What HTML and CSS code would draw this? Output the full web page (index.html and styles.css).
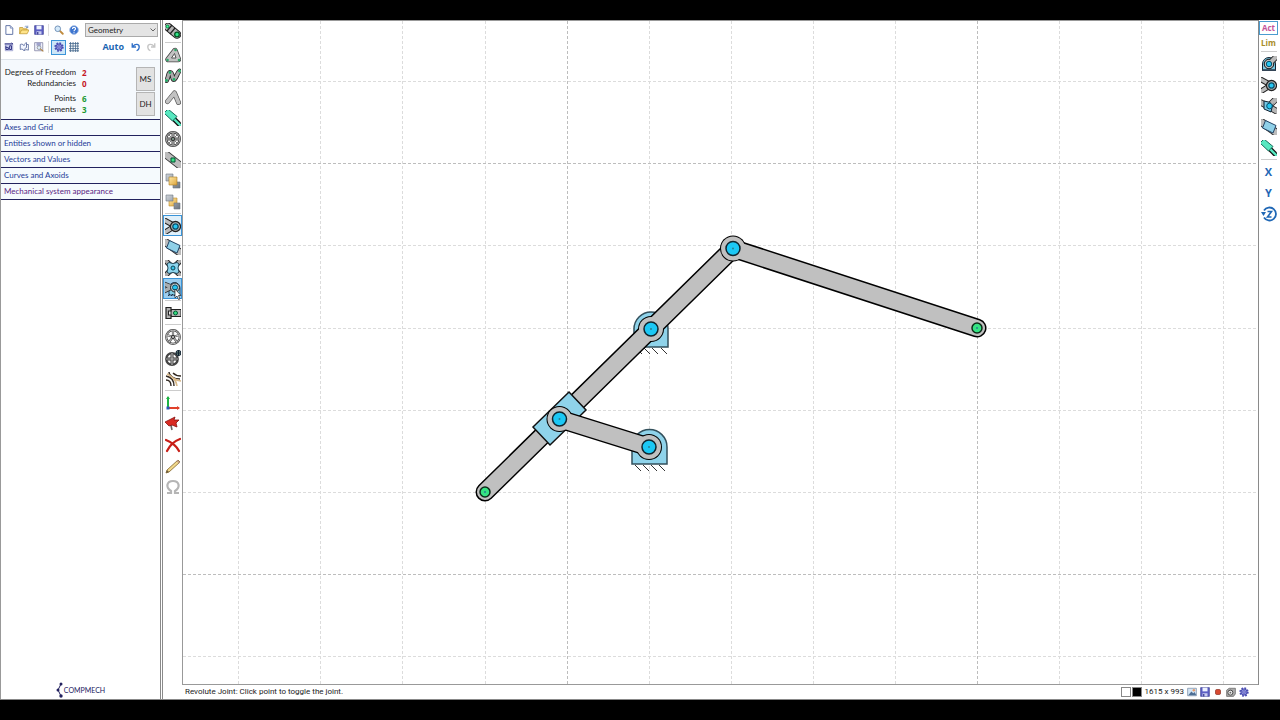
FILE: index.html
```html
<!DOCTYPE html>
<html lang="en">
<head>
<meta charset="utf-8">
<title>Mechanism editor</title>
<link rel="stylesheet" href="styles.css">
</head>
<body>
<svg class="sprite" aria-hidden="true">
  <symbol id="i-new" viewBox="0 0 16 16"><path d="M3 1h7l4 4v10H3z" fill="#fff" stroke="#5c6fa3" stroke-width="1.5"/><path d="M10 1v4h4" fill="#cfd8ee" stroke="#5c6fa3"/></symbol>
  <symbol id="i-open" viewBox="0 0 16 16"><path d="M1 14V4h5l1 2h6v3" fill="#f3d473" stroke="#b38a1c"/><path d="M1 14l3-6h12l-3 6z" fill="#ffe48a" stroke="#b38a1c"/><path d="M9 3c2-2 4-1 5 1m0-3v3h-3" fill="none" stroke="#4a6da8"/></symbol>
  <symbol id="i-save" viewBox="0 0 16 16"><path d="M1 1h14v14H1z" fill="#5c5fc4" stroke="#34368c"/><path d="M4 1h8v6H4z" fill="#eef2ff"/><path d="M4 10h8v5H4z" fill="#c9cdf0"/><path d="M5 11h2v4H5z" fill="#34368c"/></symbol>
  <symbol id="i-find" viewBox="0 0 16 16"><path d="M9 9l5 5" stroke="#c08a3c" stroke-width="3" stroke-linecap="round"/><circle cx="6" cy="6" r="4.5" fill="#d4e9fa" stroke="#6f8fb5" stroke-width="1.5"/></symbol>
  <symbol id="i-help" viewBox="0 0 16 16"><circle cx="8" cy="8" r="7" fill="#3c74cf" stroke="#a9c1e8" stroke-width="1.5"/><path d="M5.5 6.5C5.5 3 10.5 3 10.5 6c0 2-2.500 1.500-2.500 4m0 1.500v1.500" fill="none" stroke="#fff" stroke-width="1.8"/></symbol>
  <symbol id="i-fit" viewBox="0 0 16 16"><path d="M2 3h12v11H2z" fill="#c9cdee" stroke="#8d90c4"/><path d="M3 6v6M3 9h4v3H3M9 6h3v6H9zM1 3h13l-2-2" fill="none" stroke="#2d3080" stroke-width="1.5"/></symbol>
  <symbol id="i-book" viewBox="0 0 16 16"><path d="M8 14C6 11 4 11 2 12V4c2-1 4-1 6 2 0-3 2-4 4-5v8c-2 1-4 2-4 5z" fill="#f3f6ff" stroke="#5f6fa0" stroke-width="1.4"/><path d="M8 14c2-2 4-2 7-1V4h-3" fill="none" stroke="#5f6fa0" stroke-width="1.4"/></symbol>
  <symbol id="i-export" viewBox="0 0 16 16"><path d="M1 1h13v13H1z" fill="#eef0fa" stroke="#66698f"/><path d="M4 1h7v5H4z" fill="#9ea2cc"/><circle cx="8" cy="9" r="3" fill="#dcecfa" stroke="#777"/><path d="M10 11l5 4" stroke="#b0813f" stroke-width="2"/></symbol>
  <symbol id="i-gear" viewBox="0 0 16 16"><circle cx="8" cy="8" r="6" fill="none" stroke="#4a4db5" stroke-width="3" stroke-dasharray="2.700 2"/><circle cx="8" cy="8" r="5" fill="#8a8de0" stroke="#4144a6" stroke-width="1.5"/><circle cx="8" cy="8" r="2" fill="#b5b8ee" stroke="#4144a6"/></symbol>
  <symbol id="i-grid" viewBox="0 0 16 16"><path d="M2.500 0v16M6.500 0v16M10.500 0v16M14 0v16M0 2.500h16M0 6.500h16M0 10.500h16M0 14h16" stroke="#44678c" stroke-width="1.3"/></symbol>
  <symbol id="i-undo" viewBox="0 0 16 16"><path d="M2 2v6h6M3 7c4-5 11-4 10 2 0 2-2 4-4 5" fill="none" stroke="#3170c8" stroke-width="2.2"/></symbol>
  <symbol id="i-redo" viewBox="0 0 16 16"><path d="M14 2v6H8M13 7C9 2 2 3 3 9c0 2 2 4 4 5" fill="none" stroke="#c5c5c5" stroke-width="2.2"/></symbol>
  <symbol id="i-chevron" viewBox="0 0 16 16"><path d="M3 5l5 5 5-5" fill="none" stroke="#555" stroke-width="1.8"/></symbol>

  <symbol id="i-link" viewBox="0 0 16 16"><path d="M3 4l9 7.500" stroke="#222" stroke-width="8.500" stroke-linecap="round"/><path d="M3 4l9 7.500" stroke="#b4b4b4" stroke-width="6.500" stroke-linecap="round"/><path d="M2 8l5-6M5 11l5-6" stroke="#222" stroke-width="1.2"/><circle cx="2.500" cy="3.500" r="1.400" fill="#4f9" stroke="#084"/><circle cx="12" cy="11.500" r="2.300" fill="#2fe58a" stroke="#052" stroke-width="1.3"/></symbol>
  <symbol id="i-tri" viewBox="0 0 16 16"><path d="M10 3.500L3 12.500h10.500z" fill="none" stroke="#444" stroke-width="5.400" stroke-linejoin="round"/><path d="M10 3.500L3 12.500h10.500z" fill="#c2c2c2" stroke="#c2c2c2" stroke-width="3.800" stroke-linejoin="round"/><path d="M9.500 6.500l-3 4.500h4.500z" fill="#fff" stroke="#555"/><g fill="#2fa868"><circle cx="10.500" cy="3" r="1.300"/><circle cx="2.500" cy="13" r="1.300"/><circle cx="14" cy="13" r="1.300"/></g></symbol>
  <symbol id="i-poly" viewBox="0 0 16 16"><g fill="none" stroke-linecap="round" stroke-linejoin="round"><path d="M1.500 12.500C4 9 3 4 5.500 4.500S7 12 9 11.500 12 5 14.500 3" stroke="#222" stroke-width="4.800"/><path d="M1.500 12.500C4 9 3 4 5.500 4.500S7 12 9 11.500 12 5 14.500 3" stroke="#aaa" stroke-width="3.200"/></g><g fill="#1fae66"><circle cx="1.500" cy="12.500" r="1.400"/><circle cx="5" cy="4.500" r="1.400"/><circle cx="9" cy="11.500" r="1.400"/><circle cx="14.500" cy="3" r="1.400"/></g></symbol>
  <symbol id="i-angle" viewBox="0 0 16 16"><g fill="none" stroke-linecap="round" stroke-linejoin="round"><path d="M2.500 12.500L9.500 4l4 9.500" stroke="#555" stroke-width="5"/><path d="M2.500 12.500L9.500 4l4 9.500" stroke="#c2c2c2" stroke-width="3.600"/></g></symbol>
  <symbol id="i-piston" viewBox="0 0 16 16"><path d="M7 7l9 9" stroke="#111" stroke-width="5"/><path d="M7 7l9 9" stroke="#57e8c0" stroke-width="2.400"/><path d="M-1 3l4-4 9 7.500-4.500 4.500z" fill="#57e8c0" stroke="#176e5c"/></symbol>
  <symbol id="i-wheel" viewBox="0 0 16 16"><circle cx="8" cy="8" r="6.800" fill="#fff" stroke="#444" stroke-width="2.400"/><circle cx="8" cy="8" r="6.800" fill="none" stroke="#aaa"/><path d="M8 2v12M2 8h12" stroke="#444" stroke-width="3"/><path d="M4 4l8 8M12 4l-8 8" stroke="#777"/><path d="M8 2v12M2 8h12" stroke="#bbb" stroke-width="1.2"/><circle cx="8" cy="8" r="1.600" fill="#7f9a8b" stroke="#333"/></symbol>
  <symbol id="i-gearwheel" viewBox="0 0 16 16"><circle cx="8" cy="8" r="6.800" fill="#fff" stroke="#444" stroke-width="2.200"/><circle cx="8" cy="8" r="6.800" fill="none" stroke="#bbb"/><path d="M8 8V2M8 8l6-2M8 8l4 5M8 8l-4 5M8 8L2 6" stroke="#555" stroke-width="2.200"/><path d="M8 8V2M8 8l6-2M8 8l4 5M8 8l-4 5M8 8L2 6" stroke="#ccc"/><circle cx="8" cy="8" r="1.600" fill="#bbb" stroke="#333"/></symbol>
  <symbol id="i-bar" viewBox="0 0 16 16"><path d="M-1 1l18 14" stroke="#333" stroke-width="8"/><path d="M-1 1l18 14" stroke="#bcbcbc" stroke-width="6.200"/><path d="M6 6h4v4H6z" fill="#38e084" stroke="#053"/></symbol>
  <linearGradient id="slate" x2="1" y2="1"><stop offset="0" stop-color="#cfd4da"/><stop offset="1" stop-color="#6c747e"/></linearGradient>
  <linearGradient id="gold" x2="1" y2="1"><stop offset="0" stop-color="#ffe9a6"/><stop offset="1" stop-color="#dda53c"/></linearGradient>
  <symbol id="i-front" viewBox="0 0 16 16"><path d="M1 1h7v7H1zM8 9h7v6H8z" fill="url(#slate)" stroke="#6d7580" stroke-width=".6"/><path d="M4 4h8v8H4z" fill="url(#gold)" stroke="#a97e25" stroke-width=".6"/></symbol>
  <symbol id="i-back" viewBox="0 0 16 16"><path d="M4 4h8v8H4z" fill="url(#gold)" stroke="#b98b2c" stroke-width=".6"/><path d="M1 1h7v6H1zM9 9h6v6H9z" fill="url(#slate)" stroke="#6d7580" stroke-width=".6"/></symbol>
  <symbol id="i-rev" viewBox="0 0 16 16"><path d="M-1 2l11 6L-1 15" fill="none" stroke="#222" stroke-width="5.600"/><path d="M-1 2l11 6L-1 15" fill="none" stroke="#bdbdbd" stroke-width="3.600"/><circle cx="10.500" cy="8.500" r="5" fill="#c4c4c4" stroke="#222" stroke-width="1.300"/><circle cx="10.500" cy="8.500" r="2.700" fill="#25c6f2" stroke="#0a4f68" stroke-width="1.300"/></symbol>
  <symbol id="i-slide" viewBox="0 0 16 16"><path d="M-1 2l18 13" stroke="#333" stroke-width="8"/><path d="M-1 2l18 13" stroke="#bcbcbc" stroke-width="6"/><path d="M4.500 1.500L15 6.500 12 14 1.500 9z" fill="#8fd0e8" stroke="#246"/></symbol>
  <symbol id="i-cross" viewBox="0 0 16 16"><path d="M1 1l14 14M15 1L1 15" stroke="#222" stroke-width="5.500"/><path d="M0 0l16 16M16 0L0 16" stroke="#aaa" stroke-width="3.600"/><path d="M4 2.500l4 1 4-1 2 1.500-1 4 1 4-2 1.500-4-1-4 1L2 12l1-4-1-4z" fill="#8cd5ee" stroke="#245"/><circle cx="8" cy="8" r="2" fill="#38c4e8" stroke="#145"/></symbol>
  <symbol id="i-ground" viewBox="0 0 16 16"><path d="M1.500 14V8a6.500 6.500 0 0 1 13 0v6z" fill="#79c8e2" stroke="#123"/><path d="M16 0L8 8" stroke="#222" stroke-width="6"/><circle cx="8" cy="8" r="4.800" fill="#bbb" stroke="#111"/><path d="M17-1L8 8" stroke="#bbb" stroke-width="4.400"/><circle cx="8" cy="8" r="2.700" fill="#25c6f2" stroke="#05506c"/><path d="M1 13.500h14v1.500H1z" fill="#345"/></symbol>
  <symbol id="i-ground2" viewBox="0 0 16 16"><path d="M4 14V7a5 5 0 0 1 11 0v7z" fill="#84cee5" stroke="#246"/><path d="M-1 10l10-5M-1 3l10 4" stroke="#222" stroke-width="5"/><path d="M-1 10l10-5M-1 3l10 4" stroke="#a8adb0" stroke-width="3.600"/><circle cx="10" cy="6.500" r="4.500" fill="#b9c7cc" stroke="#222"/><circle cx="10" cy="6.500" r="2.500" fill="#25c6f2" stroke="#05506c"/><path d="M3 15l2-2m1 2l2-2m1 2l2-2" stroke="#234"/></symbol>
  <symbol id="i-revslide" viewBox="0 0 16 16"><path d="M-1 4l18 10M16 0L8 8" stroke="#222" stroke-width="6.500"/><path d="M-1 4l18 10M17-1L8 8" stroke="#b5b5b5" stroke-width="4.800"/><path d="M3 3l9 2-2 9-7-3z" fill="#78c9e6" stroke="#123"/><path d="M17-1L9 7" stroke="#b5b5b5" stroke-width="3"/><circle cx="8.500" cy="8" r="2.800" fill="#25c6f2" stroke="#05506c"/></symbol>
  <symbol id="i-weld" viewBox="0 0 16 16"><path d="M6 4.500h10v7H6z" fill="#b5b5b5" stroke="#222"/><path d="M1 2.500h5V6H3.500v4H6v3.500H1z" fill="#b0b0b0" stroke="#222" stroke-width="1.200"/><circle cx="10.500" cy="8" r="2" fill="#35dc7f" stroke="#053"/></symbol>
  <symbol id="i-gears" viewBox="0 0 16 16"><circle cx="7" cy="9" r="5.800" fill="#fff" stroke="#444" stroke-width="2.200"/><path d="M1 9h12M7 3v12" stroke="#333" stroke-width="3"/><path d="M1 9h12M7 3v12" stroke="#bbb" stroke-width="1.200"/><circle cx="13.500" cy="3" r="2.600" fill="#6f8a7d" stroke="#123"/><path d="M11 3h5M13.500 0v6" stroke="#123"/></symbol>
  <symbol id="i-curves" viewBox="0 0 16 16"><g fill="none"><path d="M1 5c5 1 8 4 8 10M4 1c0 4 5 7 11 7M8 2c2 2 4 3 8 3M1 9c3 0 5 2 5 6" stroke="#332a22" stroke-width="1.400"/><path d="M2 3c5 2 9 5 10 12M8 7c3 2 5 3 8 3" stroke="#d9b989" stroke-width="1.600"/></g></symbol>
  <symbol id="i-axes" viewBox="0 0 16 16"><path d="M3 13V2" stroke="#1fb443" stroke-width="2"/><path d="M1 4l2-3 2 3z" fill="#1fb443"/><path d="M3 13h11" stroke="#e0402a" stroke-width="2"/><path d="M12 11l3 2-3 2z" fill="#e0402a"/><path d="M1.500 11.500h3v3h-3z" fill="#2b57b8"/></symbol>
  <symbol id="i-flag" viewBox="0 0 16 16"><path d="M7 14L5 5" stroke="#666" stroke-width="1.600"/><path d="M0 6l10-5-1 3 5 0-3 3 1 4-5-2-3 1z" fill="#d92a22" stroke="#86120f" stroke-width=".8"/></symbol>
  <symbol id="i-delete" viewBox="0 0 16 16"><path d="M1 3c5 2 10 5 13 11M15 2C9 4 5 8 2 14" fill="none" stroke="#c81e17" stroke-width="2.200" stroke-linecap="round"/></symbol>
  <symbol id="i-pencil" viewBox="0 0 16 16"><path d="M1 15l1-3L13 2l2 2L4 14z" fill="#f2d98b" stroke="#8c7138" stroke-width=".9"/><path d="M1 15l1-3 2 2z" fill="#6b5b3b"/><path d="M12 2.500l2.500 2.500" stroke="#b98" stroke-width="1.500"/></symbol>
  <symbol id="i-omega" viewBox="0 0 16 16"><path d="M2 14h4v-2C0 8 2 2 8 2s8 6 2 10v2h4" fill="none" stroke="#b5b5b5" stroke-width="2.200"/></symbol>
  <symbol id="i-rotz" viewBox="0 0 16 16"><path d="M3 4.500a6.500 6.500 0 1 1 0 7" fill="none" stroke="#1f67b5" stroke-width="1.800"/><path d="M0 6l2.500 4L5 6z" fill="#1f67b5"/><path d="M6.500 5.500h4L6.500 11h4" fill="none" stroke="#1f67b5" stroke-width="1.600"/></symbol>
  <symbol id="i-image" viewBox="0 0 16 16"><path d="M1 2h14v12H1z" fill="#d3e5f5" stroke="#667d99"/><path d="M2 13l5-6 3 3 2-2 3 5z" fill="#4f6f94"/><circle cx="11" cy="5" r="2" fill="#e59a69"/></symbol>
  <symbol id="i-record" viewBox="0 0 16 16"><rect x="4" y="4" width="8" height="8" rx="2" fill="#d84a30" stroke="#7e2417"/></symbol>
  <symbol id="i-camera" viewBox="0 0 16 16"><path d="M1 5l4-3h10v9l-3 4H1z" fill="#aaa" stroke="#555"/><circle cx="7" cy="9" r="4" fill="#eee" stroke="#444" stroke-width="1.500"/><circle cx="7" cy="9" r="1.500" fill="#666"/></symbol>
</svg>

<div class="app">
  <aside class="panel">
    <div class="tools">
      <div class="tool-row">
        <button class="mini" aria-label="New"><svg><use href="#i-new"/></svg></button>
        <button class="mini" aria-label="Open"><svg><use href="#i-open"/></svg></button>
        <button class="mini" aria-label="Save"><svg><use href="#i-save"/></svg></button>
        <span class="divider"></span>
        <button class="mini" aria-label="Find"><svg><use href="#i-find"/></svg></button>
        <button class="mini" aria-label="Help"><svg><use href="#i-help"/></svg></button>
        <div class="select">
          <select aria-label="Mode"><option>Geometry</option></select>
          <svg><use href="#i-chevron"/></svg>
        </div>
      </div>
      <div class="tool-row">
        <button class="mini" aria-label="Fit"><svg><use href="#i-fit"/></svg></button>
        <button class="mini" aria-label="Library"><svg><use href="#i-book"/></svg></button>
        <button class="mini" aria-label="Export"><svg><use href="#i-export"/></svg></button>
        <span class="divider"></span>
        <button class="mini mini-on" aria-label="Settings"><svg><use href="#i-gear"/></svg></button>
        <button class="mini" aria-label="Grid"><svg><use href="#i-grid"/></svg></button>
        <button class="auto">Auto</button>
        <button class="mini" aria-label="Undo"><svg><use href="#i-undo"/></svg></button>
        <button class="mini" aria-label="Redo" disabled><svg><use href="#i-redo"/></svg></button>
      </div>
    </div>
    <div class="info">
      <dl class="stats">
        <dt>Degrees of Freedom</dt><dd class="red">2</dd>
        <dt>Redundancies</dt><dd class="red">0</dd>
        <dt class="second">Points</dt><dd class="second green">6</dd>
        <dt>Elements</dt><dd class="green">3</dd>
      </dl>
      <div class="info-buttons">
        <button class="square">MS</button>
        <button class="square">DH</button>
      </div>
    </div>
    <nav class="sections">
      <button class="section">Axes and Grid</button>
      <button class="section">Entities shown or hidden</button>
      <button class="section">Vectors and Values</button>
      <button class="section">Curves and Axoids</button>
      <button class="section visited">Mechanical system appearance</button>
    </nav>
    <div class="logo">
      <svg class="logo-mark" viewBox="0 0 8 16" aria-hidden="true"><path d="M5 2L2 8l3 6" fill="none" stroke="#22205e"/><g fill="#22205e"><circle cx="5" cy="2" r="1.500"/><circle cx="2" cy="8" r="1.500"/><circle cx="5" cy="14" r="1.700"/></g></svg>
      <span>COMPMECH</span>
    </div>
  </aside>

  <div class="toolbar" role="toolbar" aria-label="Elements">
    <button class="tool" aria-label="Link"><svg><use href="#i-link"/></svg></button>
    <hr>
    <button class="tool" aria-label="Triangle"><svg><use href="#i-tri"/></svg></button>
    <button class="tool" aria-label="Polyline"><svg><use href="#i-poly"/></svg></button>
    <button class="tool" aria-label="Angle"><svg><use href="#i-angle"/></svg></button>
    <button class="tool" aria-label="Actuator"><svg><use href="#i-piston"/></svg></button>
    <button class="tool" aria-label="Wheel"><svg><use href="#i-wheel"/></svg></button>
    <button class="tool" aria-label="Point on bar"><svg><use href="#i-bar"/></svg></button>
    <button class="tool" aria-label="Bring to front"><svg><use href="#i-front"/></svg></button>
    <button class="tool" aria-label="Send to back"><svg><use href="#i-back"/></svg></button>
    <hr>
    <button class="tool tool-on" aria-label="Revolute joint"><svg><use href="#i-rev"/></svg></button>
    <button class="tool" aria-label="Prismatic joint"><svg><use href="#i-slide"/></svg></button>
    <button class="tool" aria-label="Pin in slot"><svg><use href="#i-cross"/></svg></button>
    <button class="tool tool-hover" aria-label="Grounded joint"><svg><use href="#i-ground2"/></svg>
      <svg class="pointer" viewBox="0 0 8 12" aria-hidden="true"><path d="M1 1v9l2-2 1.500 3.500L6 11 4.500 7.500H7z" fill="#fff" stroke="#222" stroke-width=".7"/></svg></button>
    <hr>
    <button class="tool" aria-label="Weld"><svg><use href="#i-weld"/></svg></button>
    <hr>
    <button class="tool" aria-label="Gear"><svg><use href="#i-gearwheel"/></svg></button>
    <button class="tool" aria-label="Gear pair"><svg><use href="#i-gears"/></svg></button>
    <button class="tool" aria-label="Cam"><svg><use href="#i-curves"/></svg></button>
    <hr>
    <button class="tool" aria-label="Axes"><svg><use href="#i-axes"/></svg></button>
    <button class="tool" aria-label="Flag"><svg><use href="#i-flag"/></svg></button>
    <button class="tool" aria-label="Delete"><svg><use href="#i-delete"/></svg></button>
    <button class="tool" aria-label="Edit"><svg><use href="#i-pencil"/></svg></button>
    <button class="tool" aria-label="Omega" disabled><svg><use href="#i-omega"/></svg></button>
  </div>

  <main class="work">
    <div class="stage">
      <svg class="drawing" role="img" aria-label="Planar mechanism">
        <g transform="translate(-183 -21)">
          <g class="grid-lines">
            <path d="M238.500 21V2000M320.500 21V2000M402.500 21V2000M485.500 21V2000M649.500 21V2000M731.500 21V2000M813.500 21V2000M895.500 21V2000M1059.500 21V2000M1141.500 21V2000M1223.500 21V2000"/>
            <path d="M183 81.500H4000M183 245.500H4000M183 328.500H4000M183 410.500H4000M183 492.500H4000M183 656.500H4000"/>
            <path class="major" d="M567.500 21V2000M977.500 21V2000M183 163.500H4000M183 574.500H4000"/>
          </g>
          <g class="ground">
            <path d="M634 347V329a17 17 0 0 1 34 0v18z"/>
            <path d="M632 464V447a17.500 17.500 0 0 1 35 0v17z"/>
            <path class="hatch" d="M636 348l6 6m2-6l6 6m2-6l6 6m3-6l6 6M635 465l6 6m2-6l6 6m2-6l6 6m2-6l6 6"/>
          </g>
          <g class="edge"><path d="M485 492L733 248.500"/><circle cx="651" cy="329" r="13"/></g>
          <g class="body"><path d="M485 492L733 248.500"/><circle cx="651" cy="329" r="12"/></g>
          <g class="edge"><path d="M733 248.500L977 328"/><circle cx="733" cy="248.500" r="13"/></g>
          <g class="body"><path d="M733 248.500L977 328"/><circle cx="733" cy="248.500" r="12"/></g>
          <path class="slider" d="M569 392l17 18-36 35-17-18z"/>
          <g class="edge"><path d="M559.500 419L649 447"/><circle cx="559.500" cy="419" r="13"/><circle cx="649" cy="447" r="13"/></g>
          <g class="body"><path d="M559.500 419L649 447"/><circle cx="559.500" cy="419" r="12"/><circle cx="649" cy="447" r="12"/></g>
          <g class="pin"><circle cx="733" cy="248.500" r="7"/><circle cx="651" cy="329" r="7"/><circle cx="559.500" cy="419" r="7"/><circle cx="649" cy="447" r="7"/></g>
          <g class="free"><circle cx="485" cy="492" r="5"/><circle cx="977" cy="328" r="5"/></g>
          <g class="centers"><circle cx="733" cy="248.500" r="1"/><circle cx="651" cy="329" r="1"/><circle cx="559.500" cy="419" r="1"/><circle cx="649" cy="447" r="1"/><circle cx="485" cy="492" r="1"/><circle cx="977" cy="328" r="1"/></g>
        </g>
      </svg>
    </div>
  </main>

  <div class="toolbar toolbar-right" role="toolbar" aria-label="Drivers">
    <button class="word act">Act</button>
    <button class="word lim">Lim</button>
    <hr>
    <button class="tool" aria-label="Rotary actuator"><svg><use href="#i-ground"/></svg></button>
    <button class="tool" aria-label="Revolute driver"><svg><use href="#i-rev"/></svg></button>
    <button class="tool" aria-label="Slider revolute driver"><svg><use href="#i-revslide"/></svg></button>
    <button class="tool" aria-label="Slider driver"><svg><use href="#i-slide"/></svg></button>
    <button class="tool" aria-label="Linear actuator"><svg><use href="#i-piston"/></svg></button>
    <hr>
    <button class="tool axis">X</button>
    <button class="tool axis">Y</button>
    <button class="tool" aria-label="Rotate Z"><svg><use href="#i-rotz"/></svg></button>
  </div>

  <footer class="status">
    <span class="message">Revolute Joint: Click point to toggle the joint.</span>
    <button class="swatch white" aria-label="Background colour"></button>
    <button class="swatch black" aria-label="Line colour"></button>
    <span class="size">1615 x 993</span>
    <button class="mini" aria-label="Image"><svg><use href="#i-image"/></svg></button>
    <button class="mini" aria-label="Save image"><svg><use href="#i-save"/></svg></button>
    <button class="mini" aria-label="Record"><svg><use href="#i-record"/></svg></button>
    <button class="mini" aria-label="Camera"><svg><use href="#i-camera"/></svg></button>
    <button class="mini" aria-label="Options"><svg><use href="#i-gear"/></svg></button>
  </footer>
</div>
</body>
</html>
```
FILE: styles.css
```css
* { box-sizing: border-box; }
body {
  margin: 0;
  min-height: 100vh;
  padding: 20px 0;
  display: flex;
  background: #000;
  color: #222;
  font: 8px/12px Roboto, Arial, sans-serif;
}
button { margin: 0; padding: 0; border: 0; background: none; color: inherit; font: inherit; }
.sprite { position: absolute; width: 0; height: 0; }

.app {
  flex: 1;
  display: grid;
  grid-template-columns: 161px 21px minmax(0, 1fr) 22px;
  grid-template-rows: minmax(0, 1fr) 14px;
  background: #fff;
  border-bottom: 1px solid #888;
}

/* Side panel */
.panel {
  grid-row: 1 / 3;
  display: flex;
  flex-direction: column;
  border-left: 1px solid #999;
  border-right: 1px solid #8a8a8a;
  font-family: Lato, Arial, sans-serif;
}
.tools {
  display: flex;
  flex-direction: column;
  gap: 1px;
  padding: 2px 2px 4px 0;
}
.tool-row { display: flex; align-items: center; height: 16px; }
.mini {
  display: flex;
  align-items: center;
  justify-content: center;
  width: 15px;
  height: 15px;
}
.mini svg { width: 10px; height: 10px; }
.mini-on { border: 1px solid #3a94d8; background: #cde6f7; }
.divider { width: 1px; height: 12px; margin: 0 2px; background: #ddd; }
.select { position: relative; flex: 1; margin-left: 4px; }
.select select {
  display: block;
  width: 100%;
  height: 14px;
  padding: 0 2px;
  border: 1px solid #aaa;
  border-radius: 0;
  background: #e4e4e4;
  color: #222;
  font: inherit;
  appearance: none;
}
.select svg { position: absolute; top: 3px; right: 1px; width: 8px; height: 8px; pointer-events: none; }
.auto {
  flex: 1;
  padding-right: 4px;
  color: #1b66b3;
  font: bold 9px/14px "Open Sans", sans-serif;
  text-align: right;
}
.info {
  display: flex;
  justify-content: space-between;
  height: 60px;
  padding: 7px 5px 3px 0;
  border-top: 1px solid #dde3ea;
  background: #f5f9fd;
}
.stats {
  display: grid;
  grid-template-columns: 75px 12px;
  grid-auto-rows: max-content;
  column-gap: 6px;
  margin: 0;
  line-height: 11px;
  text-align: right;
  white-space: nowrap;
}
.stats dd { margin: 0; font: bold 8px/11px "Open Sans", sans-serif; text-align: left; }
.stats .second { padding-top: 4px; }
.red { color: #c41624; }
.green { color: #1d9a32; }
.info-buttons { display: flex; flex-direction: column; gap: 1px; }
.square { width: 19px; height: 24px; border: 1px solid #b5b5b5; background: #e2e2e2; }

.sections { border-bottom: 1px solid #22225e; }
.section {
  display: block;
  width: 100%;
  height: 16px;
  padding: 0 3px;
  border-top: 1px solid #22225e;
  background: #f5fafd;
  color: #1f3c98;
  line-height: 15px;
  text-align: left;
}
.visited { color: #5a2382; }
.logo {
  display: flex;
  align-items: center;
  justify-content: center;
  margin-top: auto;
  padding-bottom: 1px;
  color: #22205e;
  font-size: 7px;
}
.logo-mark { width: 8px; height: 16px; }

/* Tool columns */
.toolbar {
  grid-row: 1 / 3;
  display: flex;
  flex-direction: column;
  margin-left: 1px;
  border-left: 1px solid #8a8a8a;
}
.toolbar hr {
  width: 16px;
  height: 1px;
  margin: 1px auto;
  border: 0;
  background: #ccc;
}
.tool {
  position: relative;
  display: flex;
  align-items: center;
  justify-content: center;
  flex: none;
  width: 100%;
  height: 21px;
}
.tool svg { flex: none; width: 16px; height: 16px; }
.tool-on { border: 1px solid #3a94d8; background: #e0f0fa; }
.tool-hover { border: 1px solid #3a94d8; background: #9ccdee; }
.tool .pointer { position: absolute; top: 9px; left: 10px; width: 8px; height: 12px; z-index: 1; }
.toolbar-right {
  grid-column: 4;
  grid-row: 1;
  margin-left: 0;
  padding-right: 2px;
}
.word {
  height: 14px;
  margin-top: 1px;
  font: bold 8px/12px "Open Sans", sans-serif;
}
.act { border: 1px solid #4a9cd0; color: #c4559a; }
.lim { color: #a88c28; }
.axis { color: #1f67b5; font: bold 11px/20px "Open Sans", sans-serif; }

/* Canvas */
.work { display: flex; min-width: 0; }
.stage {
  flex: 1;
  overflow: hidden;
  border: solid #999;
  border-width: 1px 0 1px 1px;
}
.drawing { display: block; width: 100%; height: 100%; }
.grid-lines { fill: none; stroke: #dcdcdc; stroke-width: 1; stroke-dasharray: 3 2; }
.major { stroke: #bdbdbd; }
.ground { fill: #8fd3ea; stroke: #33505c; stroke-width: 1.5; }
.hatch { fill: none; stroke: #333; stroke-width: 1; }
.edge { fill: #000; stroke: none; }
.edge path { stroke: #000; stroke-width: 19; stroke-linecap: round; }
.body { fill: #c0c0c0; }
.body path { stroke: #c0c0c0; stroke-width: 16; stroke-linecap: round; }
.slider { fill: #8fd3ea; stroke: #111; stroke-width: 1.5; }
.pin { fill: #1cc8f5; stroke: #0f2630; stroke-width: 1.5; }
.free { fill: #35e383; stroke: #0c2a18; stroke-width: 1.5; }
.centers { fill: #2a7f92; }

/* Status bar */
.status {
  grid-column: 3 / 5;
  grid-row: 2;
  display: flex;
  align-items: center;
  padding: 0 30px 0 3px;
}
.status .mini { width: 13px; height: 13px; }
.message { flex: 1; }
.swatch { width: 10px; height: 10px; margin-right: 1px; border: 1px solid #888; }
.white { background: #fff; }
.black { background: #000; }
.size { margin: 0 1px 0 2px; }
```
